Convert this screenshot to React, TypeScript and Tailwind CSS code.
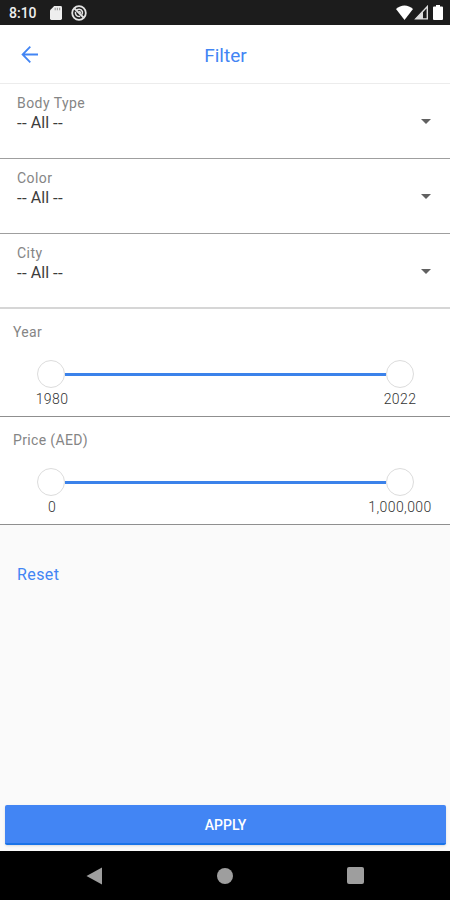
import { useState } from 'react';

const BLUE = '#4285f4';

const SELECTS = ['Body Type', 'Color', 'City'];

interface RangeProps {
  label: string;
  min: string;
  max: string;
}

function StatusBar() {
  return (
    <div className="h-[25px] shrink-0 bg-[#1c1c1c] flex items-center justify-between pl-[9px] pr-[7px] text-[#eeeeee]">
      <div className="flex items-center">
        <span className="w-[41px] pt-[2px] text-[14px] leading-[23px] font-medium">8:10</span>
        <svg width="12" height="14" viewBox="0 0 12 14" className="mt-px">
          <path d="M4.2 0H10.6Q12 0 12 1.4V12.6Q12 14 10.6 14H1.4Q0 14 0 12.6V4.2Z" fill="#eeeeee" />
          <path d="M5.2 1.8V4.2M7.4 1.8V4.2M9.6 1.8V4.2" stroke="#a0a0a0" strokeWidth="1.2" />
        </svg>
        <svg width="16" height="16" viewBox="0 0 16 16" className="ml-[9px] mt-px" fill="none" stroke="#e4e4e4">
          <circle cx="8" cy="8" r="6.8" strokeWidth="1.8" />
          <path d="M3.5 3.5L12.5 12.5" strokeWidth="1.8" />
          <path d="M5.8 4.8Q10 3.2 11.4 6.6Q11.8 8.2 10.8 9.4" strokeWidth="1.5" />
          <path d="M4.4 6.8Q4 11.8 9.2 11.6" strokeWidth="1.5" />
          <path d="M8 6.4L10 7.6" strokeWidth="1.4" />
        </svg>
      </div>
      <div className="flex items-center">
        <svg width="17" height="15" viewBox="0 0 17 15" fill="#ffffff">
          <path d="M8.5 15L0 4Q3.8 .5 8.5 .5T17 4Z" />
        </svg>
        <svg width="15" height="15" viewBox="0 0 15 15" className="ml-px">
          <path d="M13.3 1.6V13.9H1.8Z" fill="none" stroke="#dddddd" strokeWidth="1.4" />
          <path d="M9 6.5V14H1.5Z" fill="#dddddd" />
        </svg>
        <svg width="10" height="15" viewBox="0 0 10 15" className="ml-[4px]" fill="#ffffff">
          <path d="M3 0H7V1.6H9Q10 1.6 10 2.6V14Q10 15 9 15H1Q0 15 0 14V2.6Q0 1.6 1 1.6H3Z" />
        </svg>
      </div>
    </div>
  );
}

function SelectRow({ label, last }: { label: string; last: boolean }) {
  return (
    <button className={`flex h-[75px] w-full flex-col bg-white px-[17px] pt-[9px] text-left ${last ? 'border-b-2 border-[#d6d6d6]' : 'border-b border-[#9f9f9f]'}`}>
      <span className="h-[20px] text-[14px] leading-[20px] tracking-[0.45px] text-[#858585]">{label}</span>
      <span className="flex h-[20px] w-full items-center justify-between">
        <span className="flex items-center gap-[4px] text-[16px] leading-[20px] text-[#3c3c3c]">
          <span className="text-[17px] tracking-[0.2px]">--</span> All <span className="text-[17px] tracking-[0.2px]">--</span>
        </span>
        <svg width="10" height="5" viewBox="0 0 10 5" className="mr-[2px] mb-[3px]">
          <path d="M0 0H10L5 5Z" fill="#616161" />
        </svg>
      </span>
    </button>
  );
}

function RangeRow({ label, min, max }: RangeProps) {
  return (
    <div className="h-[108px] bg-white border-b border-[#8f8f8f] pt-[13px]">
      <p className="pl-[13px] h-[20px] text-[14px] leading-[20px] tracking-[0.35px] text-[#858585]">{label}</p>
      <div className="mt-[18px] ml-[37px] mr-[36px] flex h-[28px] items-center">
        <span className="h-[28px] w-[28px] rounded-full border border-[#dcdcdc] bg-white" />
        <span className="h-[3px] flex-1 bg-[#3b82ea]" />
        <span className="h-[28px] w-[28px] rounded-full border border-[#dcdcdc] bg-white" />
      </div>
      <div className="ml-[12px] mr-[10px] flex justify-between pt-px text-[14px] leading-[20px] tracking-[0.4px] font-light text-[#333333]">
        <span className="w-[80px] text-center">{min}</span>
        <span className="w-[80px] text-center">{max}</span>
      </div>
    </div>
  );
}

export default function App() {
  const [applied, setApplied] = useState(false);

  return (
    <div className="flex h-[900px] w-[450px] flex-col overflow-hidden bg-[#fafafa] font-['Roboto',sans-serif]">
      <StatusBar />

      <header className="flex h-[58px] shrink-0 items-center bg-white">
        <button className="w-[60px] pl-[21px]">
          <svg width="18" height="18" viewBox="0 0 18 18" fill="none" stroke={BLUE} strokeWidth="1.8">
            <path d="M17 9.5H2M9.3 1.7L1.6 9.5L9.3 17.3" />
          </svg>
        </button>
        <h1 className="flex-1 pr-[59px] pt-[3px] text-center text-[19px] leading-[24px] text-[#4285f4]">Filter</h1>
      </header>

      <main className="flex-1">
        <div className="h-px bg-[#ececec]" />
        {SELECTS.map((s, i) => (
          <SelectRow key={s} label={s} last={i === SELECTS.length - 1} />
        ))}
        <RangeRow label="Year" min="1980" max="2022" />
        <RangeRow label="Price (AED)" min="0" max="1,000,000" />
        <button onClick={() => setApplied(false)} className="ml-[17px] mt-[40px] text-[16px] leading-[20px] tracking-[0.4px] text-[#4285f4]">
          Reset
        </button>
      </main>

      <footer className="shrink-0 pl-[5px] pr-[4px] pb-[6px]">
        <button
          onClick={() => setApplied(true)}
          aria-pressed={applied}
          className="block h-[40px] w-full rounded-[2px] border-b-2 border-[#1a73e8] bg-[#4285f4] pt-[2px] text-[14px] font-medium text-white shadow-sm"
        >
          APPLY
        </button>
      </footer>

      <nav className="flex h-[49px] shrink-0 items-center justify-between bg-black pl-[86px] pr-[86px]">
        <svg width="17" height="18" viewBox="0 0 17 18">
          <path d="M16 .5V17.5L.5 9Z" fill="#9e9e9e" />
        </svg>
        <span className="h-[16px] w-[16px] rounded-full bg-[#9e9e9e]" />
        <span className="h-[17px] w-[17px] rounded-[2px] bg-[#9e9e9e]" />
      </nav>
    </div>
  );
}
